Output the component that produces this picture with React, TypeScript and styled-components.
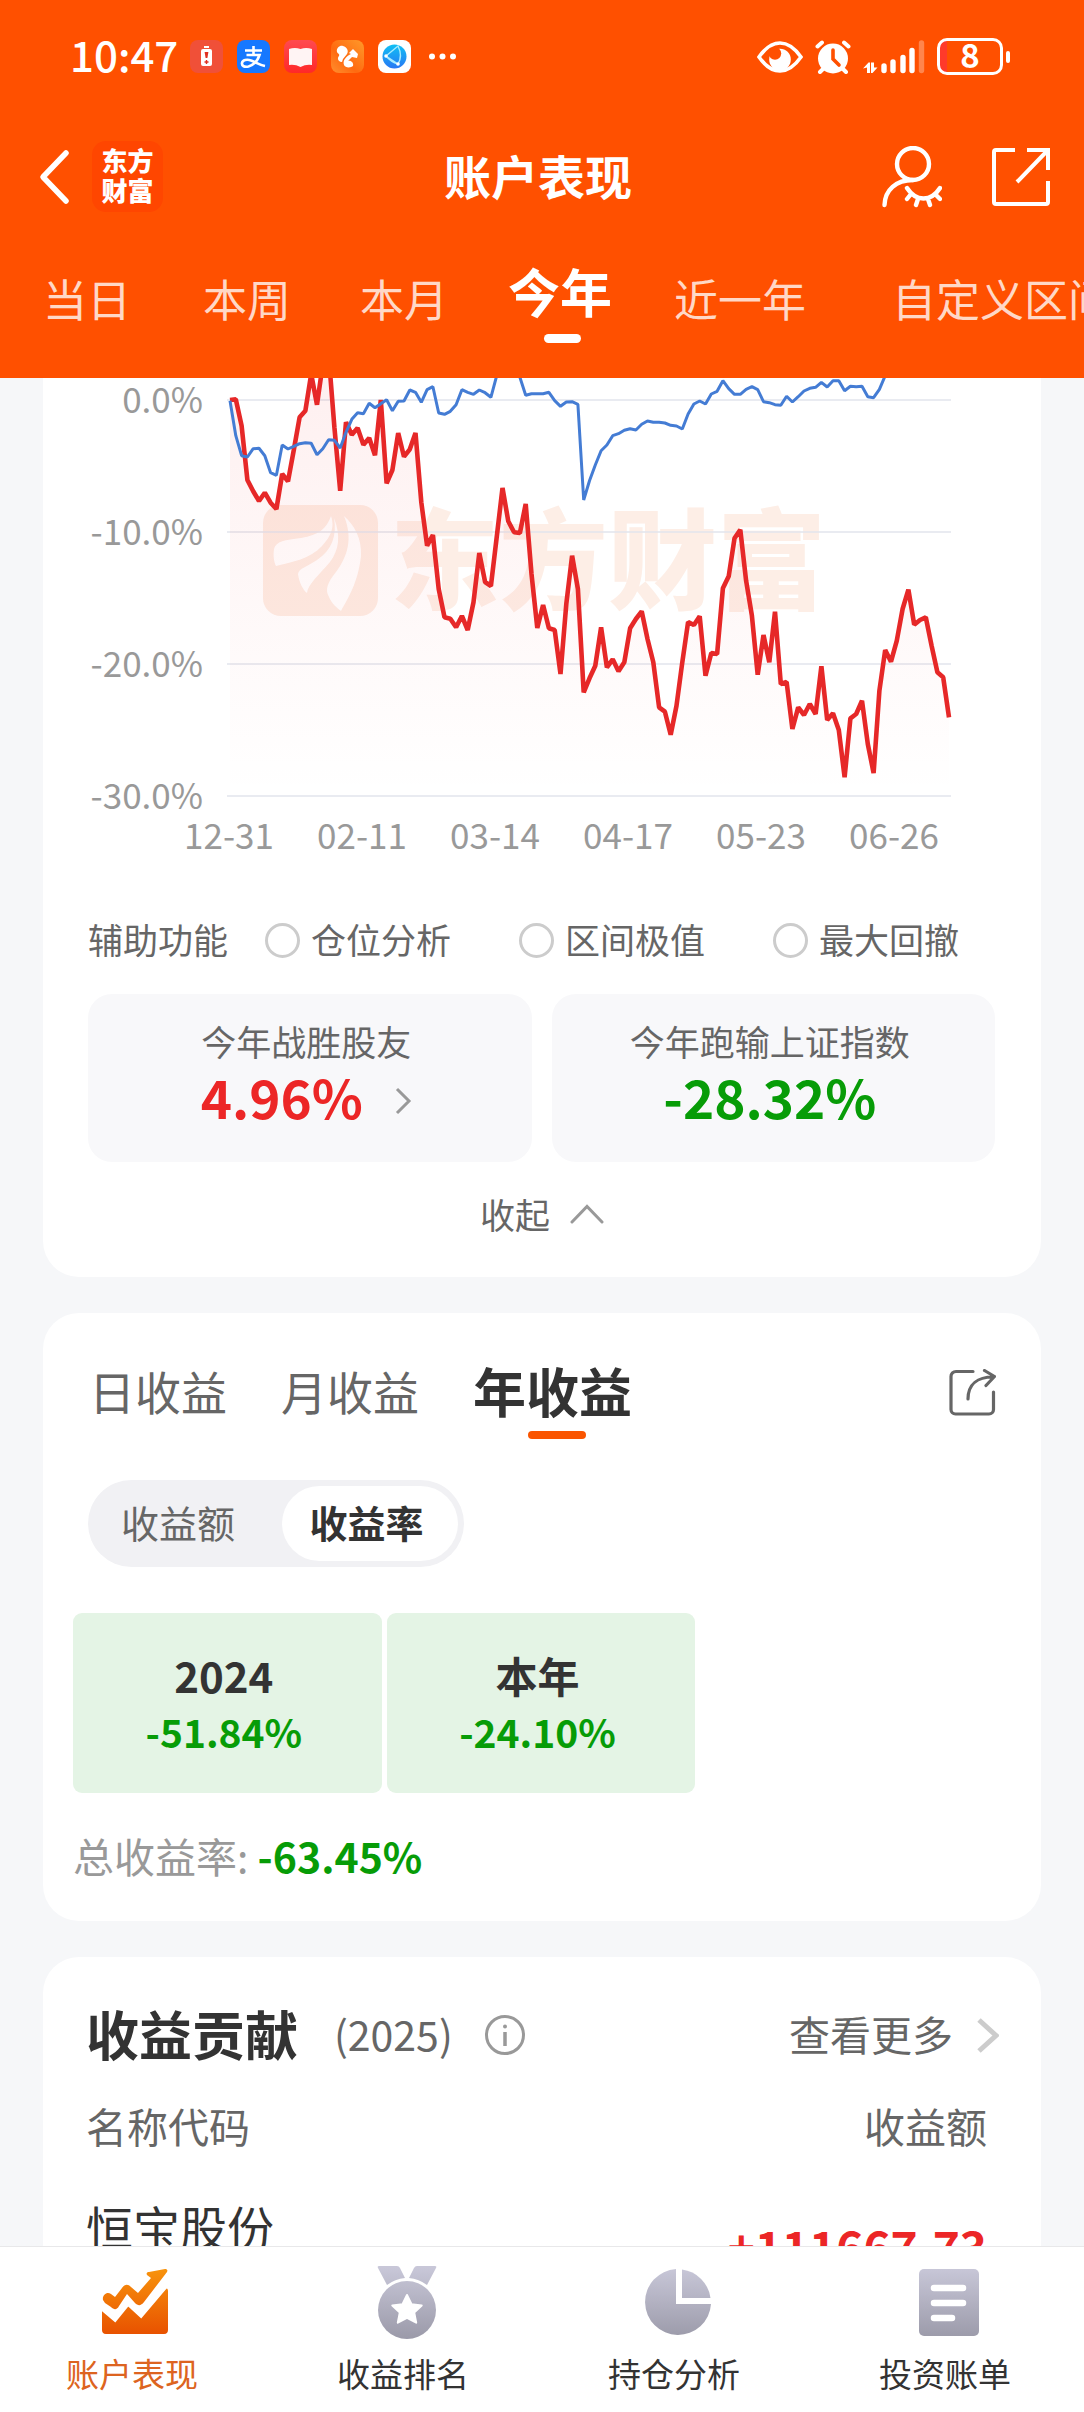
import React, { useState } from "react";
import styled, { createGlobalStyle, css } from "styled-components";

const GlobalStyle = createGlobalStyle`
  * { box-sizing: border-box; }
  html, body { margin: 0; background: #f6f7f9; }
  body, button, input, table {
    font-family: "Noto Sans CJK SC", "Noto Sans", sans-serif;
  }
  button { margin: 0; padding: 0; border: 0; background: none; color: inherit; cursor: pointer; }
  a { color: inherit; text-decoration: none; }
  svg { display: block; flex: none; }
`;

const Screen = styled.div`
  display: flex;
  flex-direction: column;
  height: 100vh;
  overflow: hidden;
`;

/* ---------- header ---------- */

const Header = styled.header`
  flex: none;
  padding-top: 32px;
  background: #ff5000;
  color: #fff;
`;

const StatusBar = styled.div`
  display: flex;
  align-items: center;
  justify-content: space-between;
  height: 49px;
  padding: 0 74px 0 70px;
`;

const StatusGroup = styled.div<{ $gap: number }>`
  display: flex;
  align-items: center;
  gap: ${(p) => p.$gap}px;
`;

const Clock = styled.span`
  font-size: 42px;
  font-weight: 500;
  line-height: 44px;
  padding-bottom: 6px;
`;

const Battery = styled.span`
  display: flex;
  align-items: center;
`;

const BatteryBody = styled.span`
  width: 66px;
  height: 37px;
  border: 3px solid #fff;
  border-radius: 10px;
  background: linear-gradient(90deg, #ff3a2a 7px, transparent 7px);
  font-size: 33px;
  font-weight: 700;
  line-height: 26px;
  text-align: center;
`;

const BatteryTip = styled.span`
  width: 4px;
  height: 12px;
  margin-left: 3px;
  border-radius: 2px;
  background: #fff;
`;

const TitleBar = styled.div`
  display: grid;
  grid-template-columns: 1fr auto 1fr;
  align-items: center;
  margin-top: 60px;
  padding: 0 34px 0 26px;
`;

const BarStart = styled.div`
  display: flex;
  align-items: center;
  gap: 14px;
`;

const BarEnd = styled.div`
  display: flex;
  align-items: center;
  justify-content: flex-end;
  gap: 50px;
`;

const Logo = styled.span`
  display: grid;
  place-content: center;
  width: 71px;
  height: 71px;
  padding-bottom: 3px;
  border-radius: 14px;
  background: #ff4600;
  font-size: 26px;
  font-weight: 900;
  line-height: 30px;
  text-align: center;
`;

const Title = styled.h1`
  margin: 0;
  padding-bottom: 4px;
  font-size: 47px;
  font-weight: 700;
  line-height: 64px;
`;

const RangeTabs = styled.nav`
  display: grid;
  grid-template-columns: 160px 160px 154px 158px 202px 322px;
  align-items: start;
  height: 166px;
  padding: 48px 0 0 7px;
  overflow: hidden;
`;

const RangeTab = styled.button<{ $active: boolean }>`
  position: relative;
  font-size: 44px;
  line-height: 76px;
  white-space: nowrap;
  color: rgba(255, 255, 255, 0.78);
  ${(p) =>
    p.$active &&
    css`
      font-size: 52px;
      font-weight: 700;
      line-height: 62px;
      color: #fff;
      &::after {
        content: "";
        position: absolute;
        left: calc(50% - 16px);
        top: 74px;
        width: 37px;
        height: 9px;
        border-radius: 5px;
        background: #fff;
      }
    `}
`;

/* ---------- content ---------- */

const Content = styled.main`
  flex: 1;
  min-height: 0;
  overflow-y: auto;
  scrollbar-width: none;
  display: flex;
  flex-direction: column;
  gap: 36px;
  padding: 0 43px;
`;

const Card = styled.section<{ $flatTop?: boolean }>`
  flex: none;
  border-radius: ${(p) => (p.$flatTop ? "0 0 36px 36px" : "36px")};
  background: #fff;
`;

const ChartSvg = styled.svg`
  width: 100%;
  height: auto;
`;

const AxisText = styled.text`
  font-size: 35px;
  fill: #999;
`;

const Helpers = styled.div`
  display: flex;
  align-items: center;
  gap: 37px;
  margin: 44px 45px 0;
  font-size: 35px;
  line-height: 50px;
  color: #666;
`;

const HelperOptions = styled.div`
  display: flex;
  gap: 68px;
`;

const HelperOption = styled.label`
  display: flex;
  align-items: center;
  gap: 11px;
`;

const Radio = styled.input`
  appearance: none;
  width: 35px;
  height: 35px;
  margin: 3px 0 0;
  border: 3px solid #ccc;
  border-radius: 50%;
`;

const Stats = styled.div`
  display: grid;
  grid-template-columns: 1fr 1fr;
  gap: 20px;
  margin: 30px 46px 0 45px;
`;

const Stat = styled.div`
  display: flex;
  flex-direction: column;
  align-items: center;
  height: 168px;
  padding: 22px 7px 0 0;
  border-radius: 24px;
  background: #f8f8fa;
`;

const StatLabel = styled.span`
  font-size: 35px;
  line-height: 50px;
  color: #666;
`;

const StatValue = styled.span<{ $up?: boolean }>`
  display: flex;
  align-items: center;
  gap: 32px;
  font-size: 53px;
  font-weight: 700;
  line-height: 60px;
  color: ${(p) => (p.$up ? "#ec2626" : "#079c07")};
`;

const StatArrow = styled.span`
  padding-top: 9px;
`;

const Collapse = styled.button`
  display: flex;
  align-items: center;
  gap: 20px;
  margin: 27px auto 0;
  font-size: 35px;
  line-height: 50px;
  color: #666;
`;

const CardEnd = styled.div`
  height: 38px;
`;

const IncomeHead = styled.div`
  display: flex;
  align-items: center;
  justify-content: space-between;
  padding: 47px 45px 0 46px;
`;

const IncomeTabs = styled.div`
  display: flex;
  align-items: center;
  gap: 54px;
`;

const IncomeTab = styled.button<{ $active: boolean }>`
  position: relative;
  font-size: 46px;
  line-height: 60px;
  color: #666;
  ${(p) =>
    p.$active &&
    css`
      font-size: 53px;
      font-weight: 700;
      color: #333;
      &::after {
        content: "";
        position: absolute;
        left: calc(50% - 25px);
        top: 71px;
        width: 58px;
        height: 8px;
        border-radius: 4px;
        background: #fa5500;
      }
    `}
`;

const ShareButton = styled.button`
  padding-top: 5px;
`;

const Segmented = styled.div`
  display: inline-flex;
  gap: 20px;
  margin: 60px 45px 0;
  padding: 6px;
  border-radius: 44px;
  background: #f1f1f4;
`;

const Segment = styled.button<{ $active: boolean }>`
  width: ${(p) => (p.$active ? 176 : 168)}px;
  height: 75px;
  padding: ${(p) => (p.$active ? "0 7px 4px 0" : "0 0 4px")};
  border-radius: 38px;
  background: ${(p) => (p.$active ? "#fff" : "transparent")};
  font-size: 38px;
  font-weight: ${(p) => (p.$active ? 700 : 400)};
  color: ${(p) => (p.$active ? "#333" : "#666")};
`;

const Years = styled.div`
  display: grid;
  grid-template-columns: repeat(3, 1fr);
  gap: 5px;
  margin: 46px 32px 0 30px;
`;

const Year = styled.div`
  display: flex;
  flex-direction: column;
  align-items: center;
  height: 180px;
  padding: 34px 7px 0 0;
  border-radius: 9px;
  background: #e4f4e5;
  font-size: 42px;
  font-weight: 700;
  line-height: 56px;
  color: #333;
`;

const YearRate = styled.span`
  font-size: 39px;
  color: #079c07;
`;

const Total = styled.p`
  margin: 32px 30px 0;
  padding-bottom: 36px;
  font-size: 41px;
  line-height: 60px;
  color: #999;
`;

const TotalRate = styled.strong`
  color: #079c07;
`;

const ContribHead = styled.div`
  display: flex;
  align-items: center;
  justify-content: space-between;
  padding: 38px 42px 0 43px;
  line-height: 76px;
  font-size: 41px;
  color: #666;
`;

const ContribTitle = styled.h2`
  margin: 0 18px 0 0;
  font-size: 53px;
  font-weight: 700;
  color: #333;
`;

const HeadGroup = styled.div`
  display: flex;
  align-items: center;
  gap: 18px;
`;

const InfoButton = styled.button`
  padding: 4px 0 0 14px;
`;

const More = styled.a`
  display: flex;
  align-items: center;
  gap: 24px;
`;

const MoreArrow = styled.span`
  padding-top: 4px;
`;

const Table = styled.table`
  width: calc(100% - 97px);
  margin: 24px 54px 0 43px;
  border-collapse: collapse;
`;

const Th = styled.th<{ $end?: boolean }>`
  padding: 0;
  font-size: 41px;
  font-weight: 400;
  line-height: 60px;
  color: #666;
  text-align: ${(p) => (p.$end ? "right" : "left")};
`;

const NameCell = styled.td`
  padding: 40px 0 78px;
  font-size: 47px;
  line-height: 62px;
  color: #333;
`;

const AmountCell = styled.td`
  padding: 0;
  font-size: 46px;
  font-weight: 700;
  line-height: 60px;
  color: #ec2626;
  text-align: right;
`;

/* ---------- bottom bar ---------- */

const BottomBar = styled.nav`
  flex: none;
  display: grid;
  grid-template-columns: repeat(4, 1fr);
  border-top: 1px solid #e8e8ea;
  background: #fff;
`;

const BottomLink = styled.a<{ $active?: boolean }>`
  display: flex;
  flex-direction: column;
  align-items: center;
  height: 165px;
  padding-top: 17px;
  font-size: 33px;
  line-height: 48px;
  color: ${(p) => (p.$active ? "#dd6420" : "#333")};
`;

const BottomLabel = styled.span`
  margin-top: 5px;
  padding-right: 7px;
`;

/* ---------- data ---------- */

/* Levels are stored in plot units: 396 units make ten percent, 118 is zero. */
const ZERO = 118;
const ACCOUNT = [
  118, 116, 195, 358, 392, 421, 396, 426, 445, 340, 362, 268, 170, 150, 40, 132, 10, -20, 200, 390, 185, 222, 202, 252,
  232, 284, 118, 368, 328, 217, 288, 266, 217, 425, 555, 523, 685, 770, 774, 800, 766, 808, 725, 577, 664, 676, 530,
  382, 482, 515, 517, 430, 640, 802, 733, 803, 808, 940, 730, 585, 685, 995, 953, 915, 800, 920, 896, 932, 905, 803,
  775, 752, 835, 905, 1040, 1053, 1122, 1035, 905, 784, 793, 767, 945, 877, 880, 683, 647, 533, 507, 660, 765, 942,
  823, 905, 753, 970, 964, 1105, 1040, 1063, 1030, 1060, 917, 1078, 1058, 1108, 1250, 1073, 1060, 1020, 1150, 1237,
  990, 868, 903, 840, 745, 687, 792, 778, 770, 855, 935, 950, 1070,
];
const INDEX = [
  120, 225, 285, 289, 264, 263, 285, 336, 344, 253, 265, 257, 249, 246, 248, 282, 264, 237, 239, 262, 215, 176, 156,
  159, 128, 141, 129, 117, 150, 122, 121, 88, 95, 125, 87, 78, 157, 161, 152, 132, 87, 95, 101, 88, 96, 110, 45, 10,
  15, 10, 50, 104, 99, 99, 99, 95, 120, 137, 124, 123, 131, 418, 360, 313, 270, 253, 225, 219, 209, 204, 208, 191, 181,
  185, 185, 187, 194, 196, 205, 160, 130, 121, 130, 100, 92, 60, 84, 101, 101, 86, 78, 87, 123, 126, 132, 134, 107,
  124, 108, 91, 83, 80, 65, 79, 60, 60, 90, 77, 78, 77, 108, 111, 86, 45, 0, -20, -30, -25, -40, -50, -45, -60, -55,
  -70, -80,
];

const PLOT = { left: 187, right: 906, zero: 22, step: 132 };

const line = (levels: number[]) =>
  levels
    .map((v, i) => {
      const x = PLOT.left + ((PLOT.right - PLOT.left) * i) / (levels.length - 1);
      const y = PLOT.zero + (v - ZERO) / 3;
      return `${x.toFixed(1)},${y.toFixed(1)}`;
    })
    .join(" ");

const LEVELS = ["0.0%", "-10.0%", "-20.0%", "-30.0%"];
const DATES = ["12-31", "02-11", "03-14", "04-17", "05-23", "06-26"];

function PerformanceChart() {
  const bottom = PLOT.zero + PLOT.step * 3;
  return (
    <ChartSvg viewBox="0 0 998 492" role="img" aria-label="今年">
      <defs>
        <linearGradient id="area" x1="0" y1="0" x2="0" y2={bottom} gradientUnits="userSpaceOnUse">
          <stop offset="0" stopColor="#f02828" stopOpacity="0.07" />
          <stop offset="1" stopColor="#f02828" stopOpacity="0" />
        </linearGradient>
      </defs>
      <g>
        <rect x="220" y="127" width="115" height="111" rx="18" fill="#fdece3" />
        <g fill="#fff">
          <path d="M288 138C284 150 276 157 258 160C242 162 233 163 231 171C230 178 231 184 233 188C249 184 267 181 279 168C288 158 292 149 288 138Z" />
          <path d="M291 140C294 158 289 172 274 182C264 189 256 190 255 196C256 204 260 212 264 215C265 206 276 197 287 184C296 172 298 158 291 140Z" />
          <path d="M301 138C310 160 305 178 293 194C284 205 282 212 286 219C289 226 294 230 298 233C305 220 315 205 318 178C319 160 311 147 301 138Z" />
        </g>
        <text x="347" y="223" fontSize="109" fontWeight="900" fill="#fdeee6">
          东方财富
        </text>
      </g>
      {LEVELS.map((label, i) => {
        const y = PLOT.zero + PLOT.step * i;
        return (
          <g key={label}>
            <line x1="184" x2="908" y1={y} y2={y} stroke="#e2e4ec" strokeWidth="1.4" />
            <AxisText x="160" y={y + 13} textAnchor="end">
              {label}
            </AxisText>
          </g>
        );
      })}
      {DATES.map((label, i) => (
        <AxisText key={label} x={186 + i * 133} y="471" textAnchor="middle">
          {label}
        </AxisText>
      ))}
      <polygon points={`${PLOT.left},${bottom} ${line(ACCOUNT)} ${PLOT.right},${bottom}`} fill="url(#area)" />
      <polyline points={line(ACCOUNT)} fill="none" stroke="#e62828" strokeWidth="4.6" strokeLinejoin="bevel" />
      <polyline points={line(INDEX)} fill="none" stroke="#447cd4" strokeWidth="3" strokeLinejoin="bevel" />
    </ChartSvg>
  );
}

/* ---------- icons ---------- */

const AppIcons = () => (
  <svg width="266" height="33" viewBox="0 0 266 33">
    <defs>
      <linearGradient id="book" x1="0" y1="0" x2="0" y2="1">
        <stop offset="0" stopColor="#ff4a50" />
        <stop offset="1" stopColor="#ff2828" />
      </linearGradient>
      <linearGradient id="uc" x1="1" y1="0" x2="0" y2="1">
        <stop offset="0" stopColor="#ff9a2a" />
        <stop offset="0.6" stopColor="#ff6a10" />
        <stop offset="1" stopColor="#ff9030" />
      </linearGradient>
      <linearGradient id="globe" x1="0" y1="0" x2="0" y2="1">
        <stop offset="0" stopColor="#10c0f4" />
        <stop offset="1" stopColor="#2878f4" />
      </linearGradient>
    </defs>
    <rect width="33" height="33" rx="8" fill="#f05038" />
    <path d="M14 6h5v2h-5zM11 11a2 2 0 0 1 2-2h7a2 2 0 0 1 2 2v13a2 2 0 0 1-2 2h-7a2 2 0 0 1-2-2z" fill="#fff" />
    <path d="M14.600 12h3.800l-1 6h-1.800z" fill="#e03020" />
    <path d="M16.500 20v4M14.500 22h4" stroke="#e03020" strokeWidth="1.400" />
    <rect x="47" width="33" height="33" rx="8" fill="#1678ff" />
    <path
      d="M55 10.500h17M63.500 6v9M56.500 15h13c-2 6-6 10-11 11.500-4 1-7-.5-6.500-3.500.5-3 5-4 9-2.500 5 2 9 4.500 14 5.500"
      fill="none"
      stroke="#fff"
      strokeWidth="2.600"
    />
    <rect x="94" width="33" height="33" rx="8" fill="url(#book)" />
    <path d="M99 9q6-2 11.500 0q5.500-2 11.500 0v16q-6-1-11.500 2q-5.500-3-11.500-2z" fill="#fff4f4" />
    <rect x="141" width="33" height="33" rx="8" fill="url(#uc)" />
    <path
      d="M147 12c-1-4 3-7 6-6 4 1 6 5 4 8l-4 5c-1 2 0 3-2 3-3-1-4-4-2-6 1-2-1-2-2-4zM159 13l4-4 5 5-1 4-5-1-4 4c3-1 6 2 5 5-2 2-8 2-9-1-2-5 3-9 7-11z"
      fill="#fff"
    />
    <rect x="188" width="33" height="33" rx="8" fill="#fff" />
    <circle cx="204.500" cy="16.500" r="12" fill="url(#globe)" />
    <path d="M196 16l12-10c3 6 3 13 0 18l-12-8M196 16q5 6 12 8" fill="none" stroke="#a8ecff" strokeWidth="1.400" />
    <g fill="#fff">
      <circle cx="196" cy="16" r="1.800" />
      <circle cx="208" cy="24" r="1.800" />
      <circle cx="242" cy="16.500" r="3" />
      <circle cx="252.500" cy="16.500" r="3" />
      <circle cx="263" cy="16.500" r="3" />
    </g>
  </svg>
);

const EyeIcon = () => (
  <svg width="46" height="32" viewBox="0 0 46 32">
    <circle cx="23" cy="18.500" r="10.800" fill="#fff" />
    <circle cx="18" cy="12.500" r="6.200" fill="#ff5000" />
    <path d="M2 16C9 6 16 2 23 2s14 4 21 14C37 26 30 30 23 30S9 26 2 16z" fill="none" stroke="#fff" strokeWidth="3.600" />
  </svg>
);

const AlarmIcon = () => (
  <svg width="36" height="34" viewBox="0 0 36 34">
    <circle cx="18" cy="18.500" r="15" fill="#fff" />
    <path d="M2.500 6.500l4.500-4M33.500 6.500l-4.500-4M5 32l4-4M31 32l-4-4" stroke="#fff" strokeWidth="4" strokeLinecap="round" />
    <path d="M18 10v9l6 6" fill="none" stroke="#ff5000" strokeWidth="3.600" strokeLinecap="round" />
  </svg>
);

const SignalIcon = () => (
  <svg width="62" height="34" viewBox="0 0 62 34">
    <path d="M0 28.500l5.500-6H7V33H4v-5.500zM14.500 27.500l-5 5.500H8V22.500h3v5z" fill="#fff" />
    <g stroke="#fff" strokeWidth="5.400" strokeLinecap="round">
      <path d="M21 26v4.500M30 22v8.500M40 17.500v13M49 10.500v20" />
      <path d="M58.500 3v27.500" opacity="0.300" />
    </g>
  </svg>
);

const BackIcon = () => (
  <svg width="52" height="60" viewBox="0 0 52 60">
    <path d="M40 6L17 30l23 24" fill="none" stroke="#fff" strokeWidth="5.500" strokeLinecap="round" strokeLinejoin="round" />
  </svg>
);

const HiddenUserIcon = () => (
  <svg width="60" height="62" viewBox="0 0 60 62" fill="none" stroke="#fff" strokeWidth="4.400" strokeLinecap="round">
    <circle cx="31" cy="18" r="16" />
    <path d="M31 34C14 34 3 44 2.500 59" />
    <path d="M25 42c9 14 24 14 33 0M29 48l-4 5M36 53l-2 6M46 53l2 6M53 48l5 5" />
  </svg>
);

const ExportIcon = () => (
  <svg width="58" height="58" viewBox="0 0 58 58" fill="none" stroke="#fff" strokeWidth="4">
    <path d="M23 2H4a2 2 0 0 0-2 2v50a2 2 0 0 0 2 2h50a2 2 0 0 0 2-2V33" />
    <path d="M35 2h21v20M56 2L25 34" />
  </svg>
);

const ShareIcon = () => (
  <svg width="47" height="47" viewBox="0 0 47 47" fill="none" stroke="#666" strokeWidth="3.200" strokeLinecap="round">
    <path d="M24 2.500H7A5 5 0 0 0 2 7.500v33a4.500 4.500 0 0 0 4.500 4.500H40a4.500 4.500 0 0 0 4.500-4.500V23" />
    <path d="M19 30C19 15 29 8 44 8M35.500 1.500L45.500 7.500L37 16.500" strokeLinejoin="round" />
  </svg>
);

const Chevron = ({ w, h, color, width }: { w: number; h: number; color: string; width: number }) => (
  <svg width={w} height={h} viewBox={`0 0 ${w} ${h}`} fill="none" stroke={color} strokeWidth={width}>
    <path d={`M2 2L${w - 3} ${h / 2}L2 ${h - 2}`} />
  </svg>
);

const UpIcon = () => (
  <svg width="34" height="20" viewBox="0 0 34 20" fill="none" stroke="#999" strokeWidth="3" strokeLinecap="round">
    <path d="M2 18L17 2.500L32 18" />
  </svg>
);

const InfoIcon = () => (
  <svg width="40" height="40" viewBox="0 0 40 40" fill="none" stroke="#999" strokeWidth="3">
    <circle cx="20" cy="20" r="18.500" />
    <path d="M20 17v14" strokeWidth="3.500" />
    <circle cx="20" cy="11.500" r="2" fill="#999" stroke="none" />
  </svg>
);

const NavSvg = ({ children }: { children: React.ReactNode }) => (
  <svg width="76" height="80" viewBox="0 0 76 80">
    <defs>
      <linearGradient id="grey" x1="0" y1="4" x2="0" y2="76" gradientUnits="userSpaceOnUse">
        <stop offset="0" stopColor="#c8c7d8" />
        <stop offset="1" stopColor="#9a99a8" />
      </linearGradient>
      <linearGradient id="orange" x1="0" y1="4" x2="0" y2="70" gradientUnits="userSpaceOnUse">
        <stop offset="0" stopColor="#f8940c" />
        <stop offset="1" stopColor="#e85200" />
      </linearGradient>
    </defs>
    {children}
  </svg>
);

const TrendIcon = () => (
  <NavSvg>
    <g fill="url(#orange)">
      <path d="M5 36c-1-5 4-9 8-6l4 3 7-9c3-4 6-4 9-1l7 6 13-15-4-3c-1-2 0-3 2-3L67 5c2 0 3 1 2 3L46 38c-3 4-6 4-9 1l-8-9-8 12c-2 4-5 4-8 1L7 39z" />
      <path d="M4 47c0-2 1-2 3-1l10 9 11-13c2-2 3-2 5 0l9 9 23-25c3-3 5-2 5 1v39c0 2-1 4-4 4H8c-3 0-4-2-4-4z" />
    </g>
    <path d="M3 43l14 12 13-16 13 12 27-32" fill="none" stroke="#fff" strokeWidth="5" />
  </NavSvg>
);

const MedalIcon = () => (
  <NavSvg>
    <g fill="url(#grey)">
      <path d="M9 4q-1-2 1-2h18q2 0 3 2l5 10q-10 1-18 7zM67 4q1-2-1-2H48q-2 0-3 2l-5 10q10 1 18 7z" />
      <circle cx="38" cy="46" r="29" />
    </g>
    <path
      d="M38 31l4.500 9.200 10.200 1.300-7.500 7 2 10.200L38 53.800l-9.200 4.900 2-10.200-7.500-7 10.200-1.300z"
      fill="#fff"
      stroke="#fff"
      strokeWidth="2"
      strokeLinejoin="round"
    />
  </NavSvg>
);

const PieIcon = () => (
  <NavSvg>
    <g fill="url(#grey)">
      <path d="M36 5v35h35a33 33 0 1 1-35-35z" />
      <path d="M42 5.500a33 33 0 0 1 28.500 28.500H42z" />
    </g>
  </NavSvg>
);

const BillIcon = () => (
  <NavSvg>
    <rect x="8" y="5" width="60" height="67" rx="5" fill="url(#grey)" />
    <path d="M23 24h29M23 39h29M23 54h18" stroke="#fff" strokeWidth="6.500" strokeLinecap="round" />
  </NavSvg>
);

/* ---------- page ---------- */

const RANGES = ["当日", "本周", "本月", "今年", "近一年", "自定义区间"];
const HELPERS = ["仓位分析", "区间极值", "最大回撤"];
const INCOME = ["日收益", "月收益", "年收益"];
const MEASURES = ["收益额", "收益率"];
const YEARS = [
  { year: "2024", rate: "-51.84%" },
  { year: "本年", rate: "-24.10%" },
];
const LINKS = [
  { label: "账户表现", Icon: TrendIcon },
  { label: "收益排名", Icon: MedalIcon },
  { label: "持仓分析", Icon: PieIcon },
  { label: "投资账单", Icon: BillIcon },
];

export default function App() {
  const [range, setRange] = useState("今年");
  const [income, setIncome] = useState("年收益");
  const [measure, setMeasure] = useState("收益率");

  return (
    <Screen>
      <GlobalStyle />
      <Header>
        <StatusBar>
          <StatusGroup $gap={12}>
            <Clock>10:47</Clock>
            <AppIcons />
          </StatusGroup>
          <StatusGroup $gap={12}>
            <EyeIcon />
            <AlarmIcon />
            <SignalIcon />
            <Battery>
              <BatteryBody>8</BatteryBody>
              <BatteryTip />
            </Battery>
          </StatusGroup>
        </StatusBar>
        <TitleBar>
          <BarStart>
            <button aria-label="返回">
              <BackIcon />
            </button>
            <Logo>
              <span>东方</span>
              <span>财富</span>
            </Logo>
          </BarStart>
          <Title>账户表现</Title>
          <BarEnd>
            <button aria-label="隐藏账户">
              <HiddenUserIcon />
            </button>
            <button aria-label="分享">
              <ExportIcon />
            </button>
          </BarEnd>
        </TitleBar>
        <RangeTabs>
          {RANGES.map((name) => (
            <RangeTab key={name} $active={name === range} onClick={() => setRange(name)}>
              {name}
            </RangeTab>
          ))}
        </RangeTabs>
      </Header>

      <Content>
        <Card $flatTop>
          <PerformanceChart />
          <Helpers>
            <span>辅助功能</span>
            <HelperOptions>
              {HELPERS.map((name) => (
                <HelperOption key={name}>
                  <Radio type="radio" name="helper" />
                  {name}
                </HelperOption>
              ))}
            </HelperOptions>
          </Helpers>
          <Stats>
            <Stat>
              <StatLabel>今年战胜股友</StatLabel>
              <StatValue $up>
                4.96%
                <StatArrow>
                  <Chevron w={17} h={28} color="#999" width={3} />
                </StatArrow>
              </StatValue>
            </Stat>
            <Stat>
              <StatLabel>今年跑输上证指数</StatLabel>
              <StatValue>-28.32%</StatValue>
            </Stat>
          </Stats>
          <Collapse>
            收起
            <UpIcon />
          </Collapse>
          <CardEnd />
        </Card>

        <Card>
          <IncomeHead>
            <IncomeTabs>
              {INCOME.map((name) => (
                <IncomeTab key={name} $active={name === income} onClick={() => setIncome(name)}>
                  {name}
                </IncomeTab>
              ))}
            </IncomeTabs>
            <ShareButton aria-label="分享收益">
              <ShareIcon />
            </ShareButton>
          </IncomeHead>
          <Segmented>
            {MEASURES.map((name) => (
              <Segment key={name} $active={name === measure} onClick={() => setMeasure(name)}>
                {name}
              </Segment>
            ))}
          </Segmented>
          <Years>
            {YEARS.map((y) => (
              <Year key={y.year}>
                {y.year}
                <YearRate>{y.rate}</YearRate>
              </Year>
            ))}
          </Years>
          <Total>
            总收益率: <TotalRate>-63.45%</TotalRate>
          </Total>
        </Card>

        <Card>
          <ContribHead>
            <HeadGroup>
              <ContribTitle>收益贡献</ContribTitle>
              <span>(2025)</span>
              <InfoButton aria-label="说明">
                <InfoIcon />
              </InfoButton>
            </HeadGroup>
            <More href="#more">
              查看更多
              <MoreArrow>
                <Chevron w={22} h={35} color="#ccc" width={5} />
              </MoreArrow>
            </More>
          </ContribHead>
          <Table>
            <thead>
              <tr>
                <Th>名称代码</Th>
                <Th $end>收益额</Th>
              </tr>
            </thead>
            <tbody>
              <tr>
                <NameCell>恒宝股份</NameCell>
                <AmountCell>+111667.73</AmountCell>
              </tr>
            </tbody>
          </Table>
        </Card>
      </Content>

      <BottomBar>
        {LINKS.map(({ label, Icon }, i) => (
          <BottomLink key={label} href={`#${i}`} $active={i === 0}>
            <Icon />
            <BottomLabel>{label}</BottomLabel>
          </BottomLink>
        ))}
      </BottomBar>
    </Screen>
  );
}
